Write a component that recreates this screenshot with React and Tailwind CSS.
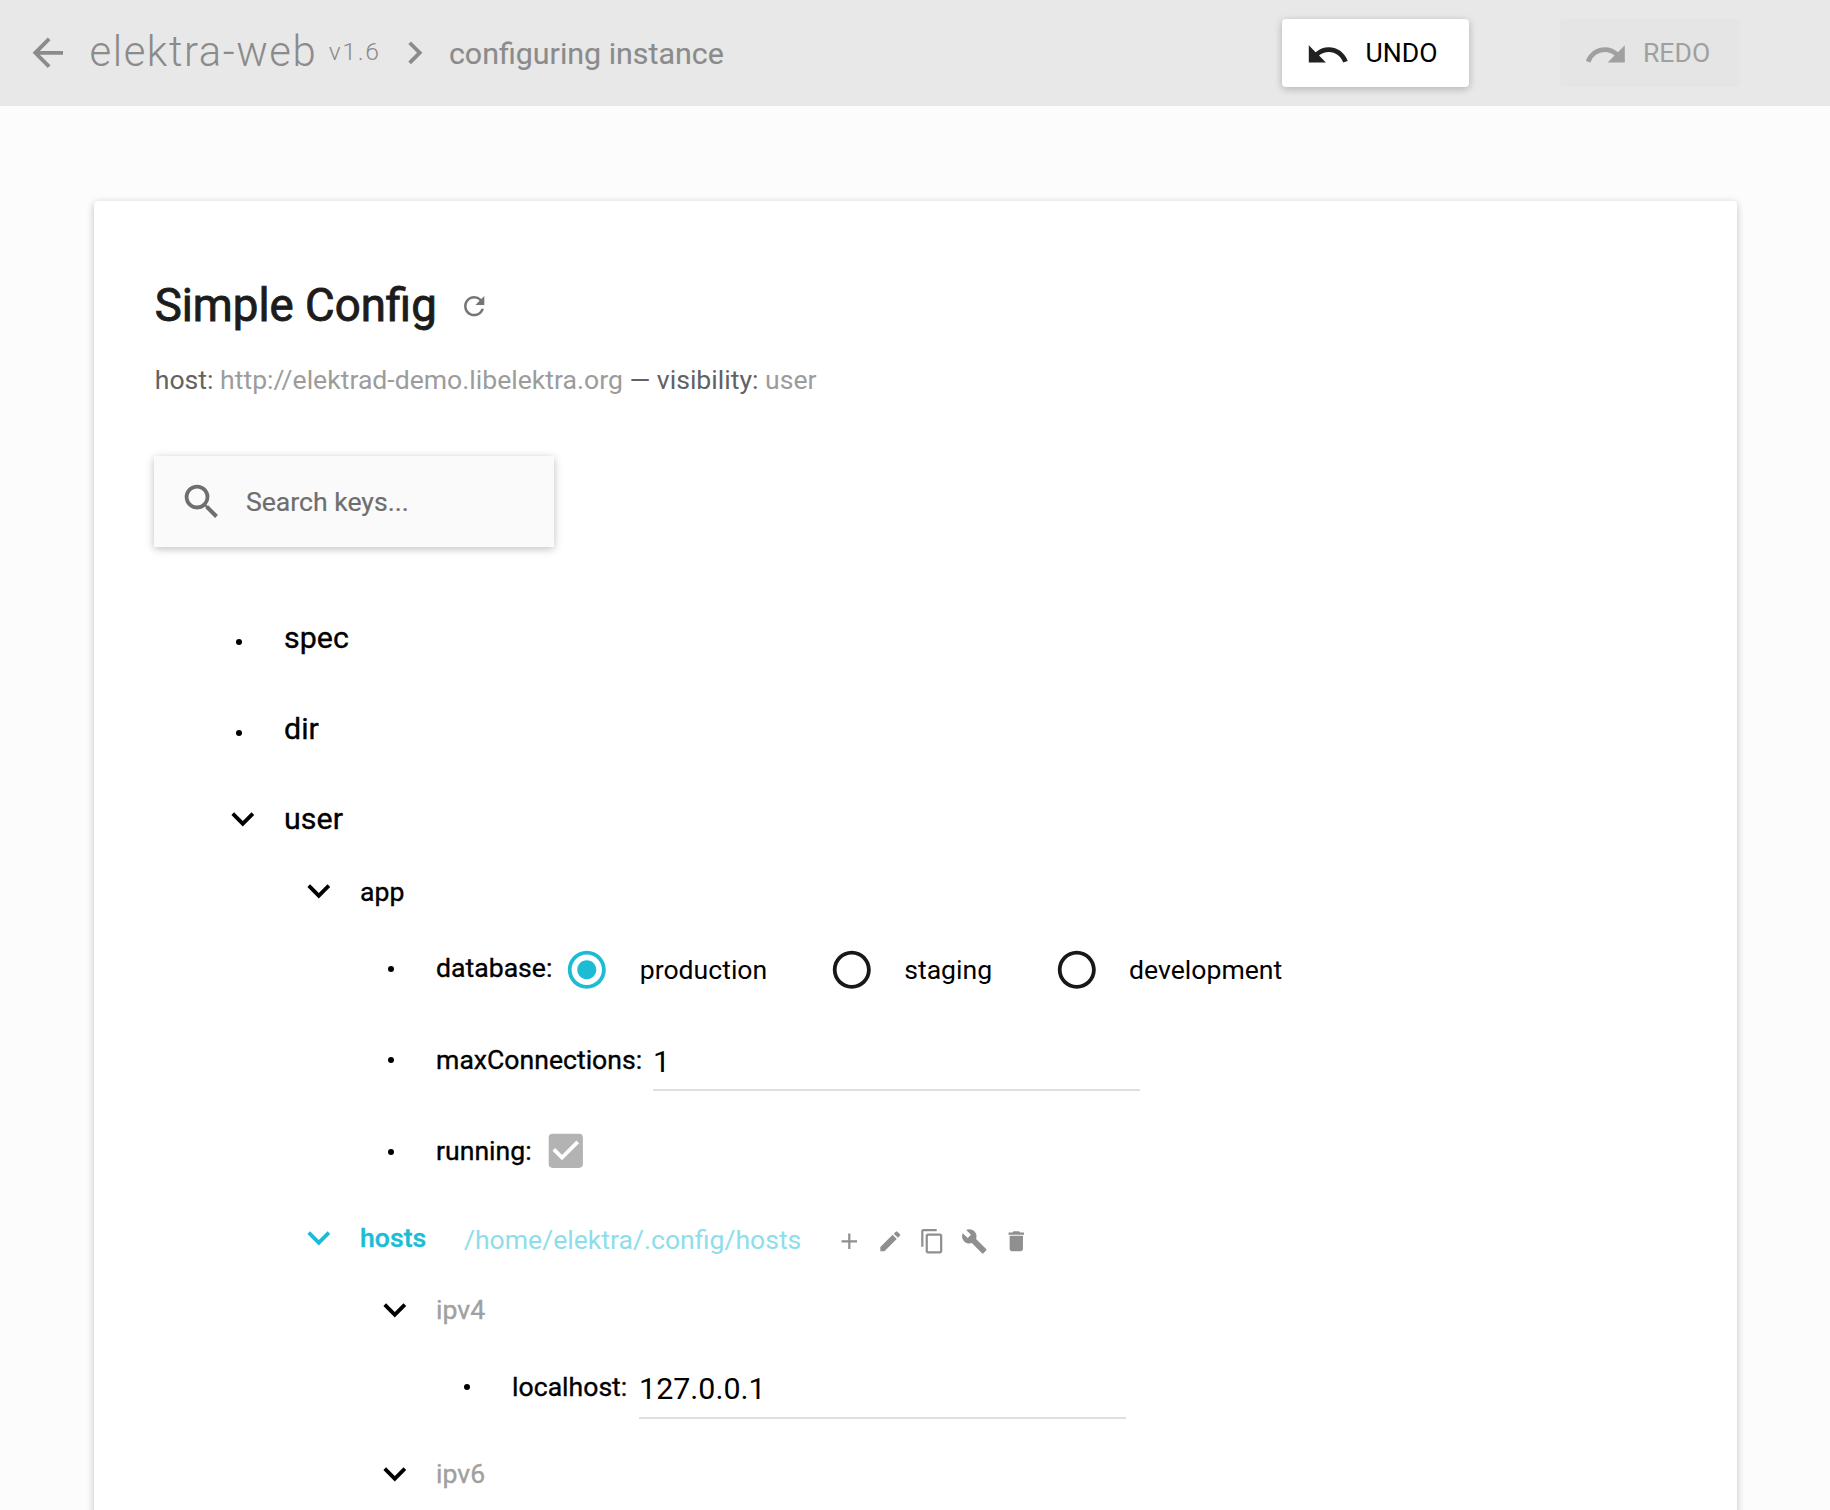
import React from "react";
import {
  MdAdd,
  MdArrowBack,
  MdBuild,
  MdCheckBox,
  MdChevronRight,
  MdContentCopy,
  MdDelete,
  MdEdit,
  MdExpandMore,
  MdRadioButtonChecked,
  MdRadioButtonUnchecked,
  MdRedo,
  MdRefresh,
  MdSearch,
  MdUndo,
} from "react-icons/md";

function Header() {
  return (
    <header className="flex h-[106px] items-center bg-[#e8e8e8] pl-[25.4px] text-[#8b8b8b]">
      <MdArrowBack className="size-[45.6px] shrink-0" />
      <span className="ml-[18.6px] -mt-[3px] text-[41.8px] font-light leading-[50px] tracking-[1.55px]">elektra-web</span>
      <span className="ml-[11.6px] -mt-[2px] text-[24.7px] font-light leading-[30px] tracking-[1.7px]">v1.6</span>
      <MdChevronRight className="ml-[11.4px] size-[45.6px] shrink-0" />
      <span className="ml-[11.2px] mt-[1px] text-[30.4px] leading-[36px] [-webkit-text-stroke:0.15px]">configuring instance</span>
      <div className="ml-auto mr-[90px] flex gap-[91px]">
        <button className="flex h-[68px] w-[187px] items-center rounded-[4px] bg-white pl-[23.4px] text-[26.6px] text-black shadow-[0_2px_10px_rgba(0,0,0,0.12),0_2px_7px_rgba(0,0,0,0.12)]">
          <MdUndo className="mt-[3px] size-[45.6px] text-[#212121]" />
          <span className="ml-[14.6px] leading-[32px]">UNDO</span>
        </button>
        <button className="flex h-[68px] w-[180px] items-center rounded-[4px] bg-[#e5e5e5] pl-[23.4px] text-[26.6px] text-[#a0a0a0]">
          <MdRedo className="mt-[3px] size-[45.6px]" />
          <span className="ml-[14px] leading-[32px]">REDO</span>
        </button>
      </div>
    </header>
  );
}

function Chevron({ className = "" }) {
  return <MdExpandMore className={"mr-[18.8px] size-[45.6px] shrink-0 " + className} />;
}

function Bullet({ className = "" }) {
  return (
    <span className={"mr-[18.8px] flex w-[45.6px] shrink-0 justify-center pr-[6.8px] " + className}>
      <i className="size-[6px] rounded-full bg-black" />
    </span>
  );
}

function Label({ children, className = "text-[26.6px]" }) {
  return <span className={"leading-[34px] [-webkit-text-stroke:0.35px] " + className}>{children}</span>;
}

function Option({ icon: Icon, checked, children }) {
  return (
    <label className="flex items-center">
      <Icon className={"size-[45.6px] " + (checked ? "text-[#1bbcd4]" : "text-[#181818]")} />
      <span className="ml-[30px] text-[26.6px] leading-[34px]">{children}</span>
    </label>
  );
}

function Field({ value, className = "" }) {
  return (
    <div className={"flex h-[62px] w-[487px] items-center border-b-2 border-[#dfdfdf] pt-[5px] text-[30.4px] leading-[36px] " + className}>
      {value}
    </div>
  );
}

function Tree() {
  return (
    <div className="ml-[65.7px] mt-[45px] flex flex-col text-black">
      <div className="flex h-[92px] items-center">
        <Bullet className="mt-[7px]" />
        <Label className="text-[30.4px]">spec</Label>
      </div>
      <div className="flex h-[91px] items-center">
        <Bullet className="mt-[7px]" />
        <Label className="-mt-[2px] text-[30.4px]">dir</Label>
      </div>
      <div className="flex h-[88px] items-center">
        <Chevron />
        <Label className="text-[30.4px]">user</Label>
      </div>

      <div className="flex flex-col pl-[76px]">
        <div className="flex h-[58px] items-center">
          <Chevron className="-mt-[2px]" />
          <Label>app</Label>
        </div>
        <div className="flex flex-col pl-[76px]">
          <div className="flex h-[94px] items-center">
            <Bullet className="mt-[2px]" />
            <Label>database:</Label>
            <div className="ml-[11.8px] mt-[3px] flex gap-[61.4px]">
              <Option icon={MdRadioButtonChecked} checked>production</Option>
              <Option icon={MdRadioButtonUnchecked}>staging</Option>
              <Option icon={MdRadioButtonUnchecked}>development</Option>
            </div>
          </div>
          <div className="flex h-[90px] items-center">
            <Bullet />
            <Label className="-mt-[1px] text-[26.6px]">maxConnections:</Label>
            <Field value="1" className="ml-[10.9px]" />
          </div>
          <div className="flex h-[92px] items-center">
            <Bullet className="mt-[2px]" />
            <Label>running:</Label>
            <MdCheckBox className="-mt-[1px] ml-[11px] size-[45.6px] text-[#b3b3b3]" />
          </div>
        </div>

        <div className="flex h-[83px] items-center">
          <Chevron className="-mt-[2px] text-[#1bbcd4]" />
          <Label className="-mt-[1px] text-[26.6px] font-medium text-[#1bbcd4]">hosts</Label>
          <span className="ml-[37.8px] mt-[2px] text-[26.6px] leading-[34px] text-[#8ddeea]">/home/elektra/.config/hosts</span>
          <div className="ml-[34.2px] mt-[6px] flex gap-[15.2px] text-[#8f8f8f]">
            <MdAdd className="size-[26.6px]" />
            <MdEdit className="size-[26.6px]" />
            <MdContentCopy className="size-[26.6px]" />
            <MdBuild className="size-[26.6px]" />
            <MdDelete className="size-[26.6px]" />
          </div>
        </div>
        <div className="flex flex-col pl-[76px]">
          <div className="flex h-[60px] items-center">
            <Chevron className="-mt-[1px]" />
            <Label className="text-[26.6px] text-[#a0a0a0]">ipv4</Label>
          </div>
          <div className="flex h-[93px] items-center pl-[76px]">
            <Bullet className="mt-[1px]" />
            <Label>localhost:</Label>
            <Field value="127.0.0.1" className="ml-[11.8px] mt-[2px]" />
          </div>
          <div className="flex h-[82px] items-center">
            <Chevron className="-mt-[1px]" />
            <Label className="text-[26.6px] text-[#a0a0a0]">ipv6</Label>
          </div>
        </div>
      </div>
    </div>
  );
}

export default function App() {
  return (
    <div className="h-[1510px] overflow-hidden bg-[#fcfcfc] font-['Roboto',sans-serif]">
      <Header />
      <main className="mx-[94px] mt-[95px] w-[1643px] rounded-[4px] bg-white px-[60px] pb-[80px] pt-[78px] shadow-[0_2px_10px_rgba(0,0,0,0.12),0_2px_7px_rgba(0,0,0,0.12)]">
        <div className="flex h-[54px] items-center pl-[0.7px]">
          <h1 className="text-[45.6px] leading-[54px] text-[#1c1c1c] [-webkit-text-stroke:0.9px]">Simple Config</h1>
          <MdRefresh className="ml-[22.2px] size-[30.4px] text-[#757575]" />
        </div>
        <p className="mt-[30px] pl-[0.8px] text-[26.6px] leading-[34px] text-[#9c9c9c]">
          <span className="text-[#626262]">host:</span> http://elektrad-demo.libelektra.org{" "}
          <span className="text-[#626262]">— visibility:</span> user
        </p>
        <div className="mt-[59px] flex h-[91px] w-[400px] items-center bg-[#fafafa] pl-[25.3px] text-[#6e6e6e] shadow-[0_2px_10px_rgba(0,0,0,0.12),0_2px_7px_rgba(0,0,0,0.14)]">
          <MdSearch className="size-[45.6px]" />
          <span className="ml-[21px] text-[26.6px] leading-[34px] [-webkit-text-stroke:0.2px]">Search keys...</span>
        </div>
        <Tree />
      </main>
    </div>
  );
}
